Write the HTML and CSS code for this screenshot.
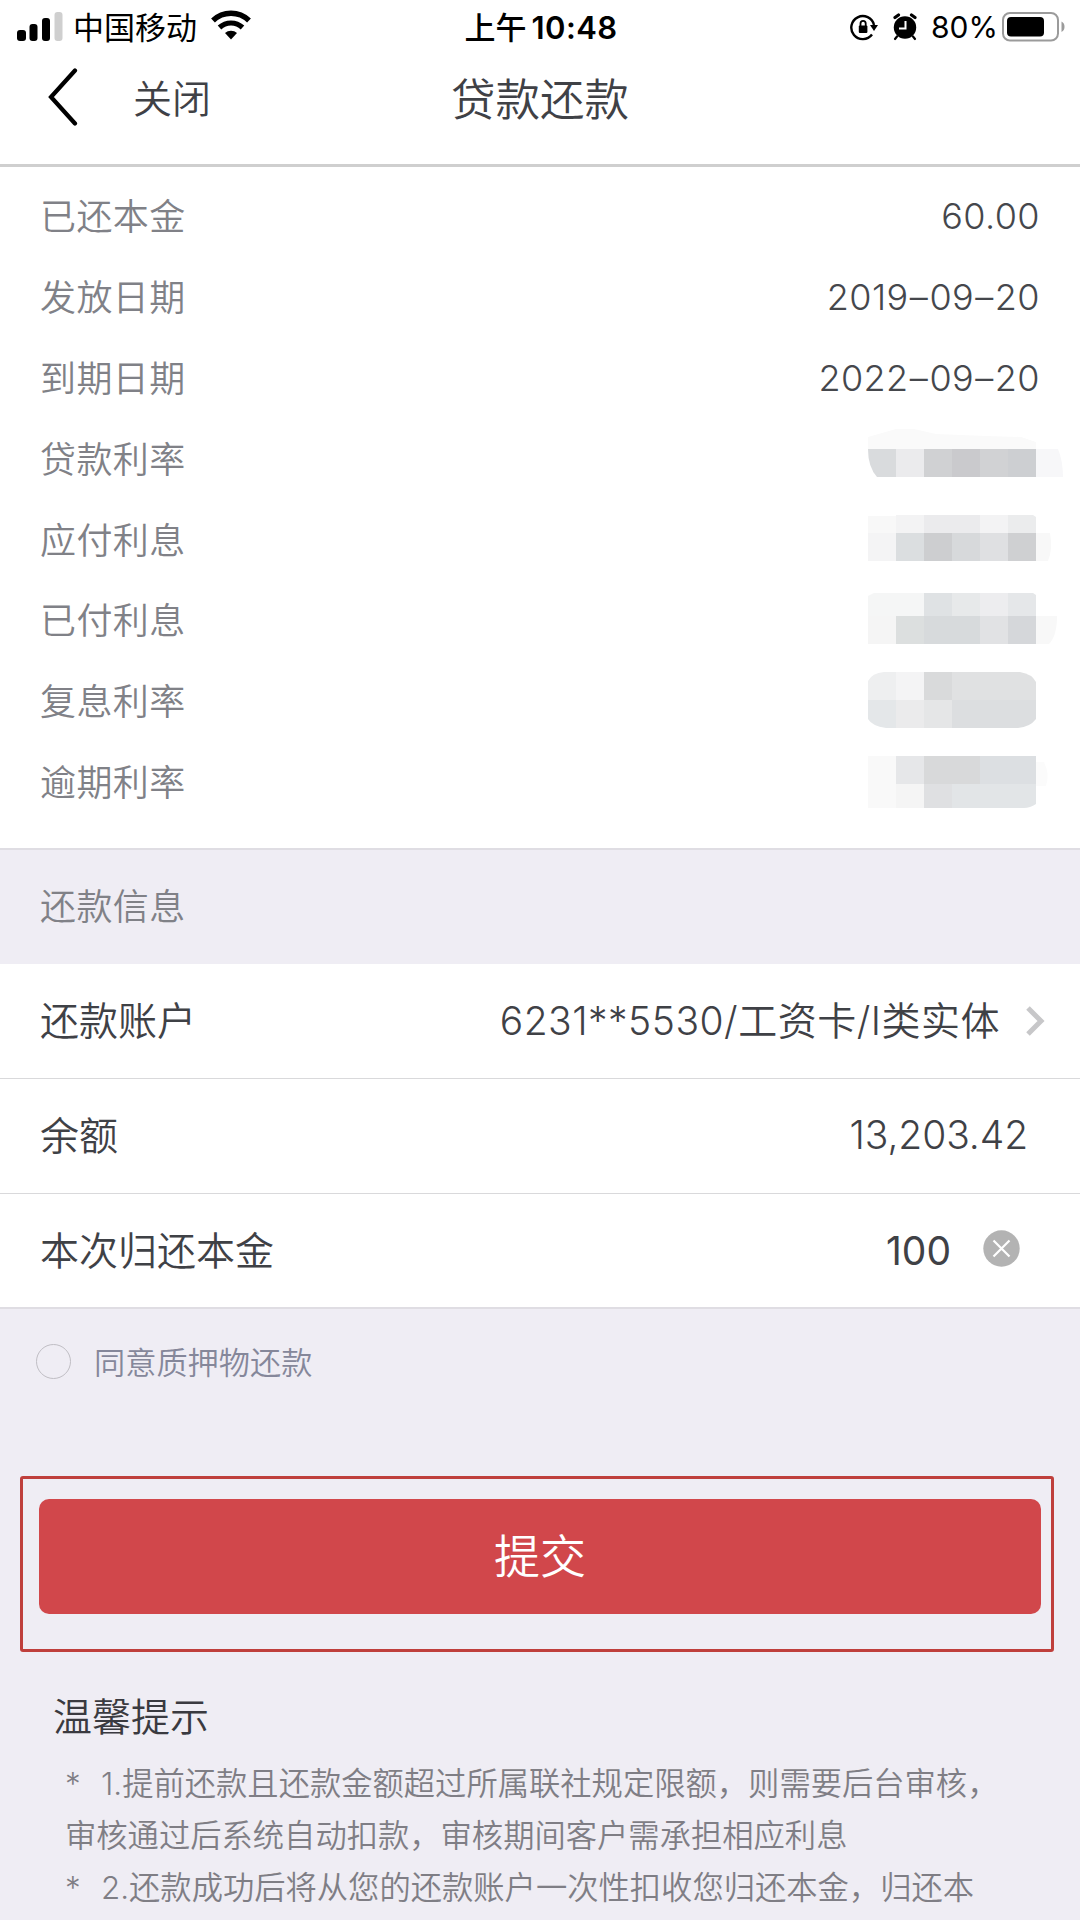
FILE: index.html
```
<!DOCTYPE html>
<html lang="zh-CN">
<head>
    <meta charset="UTF-8">
    <meta name="viewport" content="width=device-width, initial-scale=1.0">
    <title>贷款还款</title>
    <link rel="stylesheet" href="styles.css">
</head>
<body>
    <div class="status-bar">
        <div class="status-left">
            <svg class="signal" width="46" height="30" viewBox="0 0 46 30">
                <rect x="0" y="19" width="9" height="11" rx="3"/>
                <rect x="12.5" y="13" width="8" height="17" rx="3"/>
                <rect x="25" y="7" width="8" height="23" rx="3"/>
                <rect x="37.5" y="1" width="8" height="29" rx="3" fill="#cfcfcf"/>
            </svg>
            <span class="carrier">中国移动</span>
            <svg class="wifi" width="40" height="30" viewBox="0 0 40 30">
                <path d="M2 10.5a26 26 0 0 1 36 0" fill="none" stroke="#000" stroke-width="5.5"/>
                <path d="M8.5 17.5a17 17 0 0 1 23 0" fill="none" stroke="#000" stroke-width="5.2"/>
                <path d="M14 23a9 9 0 0 1 12 0l-6 6.5z"/>
            </svg>
        </div>
        <div class="status-time">上午<b>10:48</b></div>
        <div class="status-right">
            <svg width="28" height="28" viewBox="0 0 28 28">
                <path d="M22 21.5A11.5 11.5 0 1 1 24 12" fill="none" stroke="#000" stroke-width="2.4"/>
                <path d="M20 12h8l-4 6z"/>
                <rect x="8.8" y="12.5" width="8.6" height="7.5" rx="1"/>
                <path d="M10.5 13v-2.5a2.6 2.6 0 0 1 5.200 0v2.500" fill="none" stroke="#000" stroke-width="1.8"/>
            </svg>
            <svg class="alarm" width="24" height="28" viewBox="0 0 24 28">
                <circle cx="12" cy="14.5" r="11.2"/>
                <path d="M2 4.500l3.500-2.500M22 4.500l-3.500-2.500" stroke="#000" stroke-width="3.2" stroke-linecap="round"/>
                <path d="M4 23.500l-2 2.500M20 23.500l2 2.500" stroke="#000" stroke-width="2.2" stroke-linecap="round"/>
                <path d="M12.500 8v7.500H6" fill="none" stroke="#fff" stroke-width="2"/>
            </svg>
            <span class="percent">80%</span>
            <svg class="battery" width="63" height="32" viewBox="0 0 63 32">
                <rect x="1" y="2" width="55" height="27.5" rx="7" fill="none" stroke="#9b9b9b" stroke-width="2"/>
                <rect x="5" y="6" width="37" height="19.5" rx="4"/>
                <path d="M59.500 10.500q3 1.500 3 5.200t-3 5.200z" fill="#9b9b9b"/>
            </svg>
        </div>
    </div>

    <div class="nav-bar">
        <div class="nav-left">
            <svg width="30" height="58" viewBox="0 0 30 58">
                <path d="M27 2.500L3 29l24 26.500" fill="none" stroke="#000" stroke-width="4.2" stroke-linecap="round"/>
            </svg>
            <a class="close">关闭</a>
        </div>
        <h1>贷款还款</h1>
    </div>

    <div class="detail-list">
        <div class="detail-row">
            <span>已还本金</span>
            <span class="value">60.00</span>
        </div>
        <div class="detail-row">
            <span>发放日期</span>
            <span class="value date">2019<i>–</i>09<i>–</i>20</span>
        </div>
        <div class="detail-row">
            <span>到期日期</span>
            <span class="value date">2022<i>–</i>09<i>–</i>20</span>
        </div>
        <div class="detail-row">
            <span>贷款利率</span>
            <svg class="mask" width="196" height="80" viewBox="0 0 196 80">
                <path d="M0 30V18l28-8h18l22 5 50 2 35 1 15 5v7z" fill="#fafafa"/>
                <path d="M0 30h28v28H9Q0 48 0 30z" fill="#d9dbdd"/>
                <path d="M28 30h28v28H28z" fill="#ebebed"/>
                <path d="M56 30h28v28H56z" fill="#d0d1d3"/>
                <path d="M84 30h28v28H84z" fill="#cacacd"/>
                <path d="M112 30h28v28h-28z" fill="#d1d2d4"/>
                <path d="M140 30h28v28h-28z" fill="#cdcfd2"/>
                <path d="M168 30h22q5 12 5 28h-27z" fill="#f7f7f9"/>
            </svg>
        </div>
        <div class="detail-row">
            <span>应付利息</span>
            <svg class="mask" width="196" height="80" viewBox="0 0 196 80">
                <path d="M0 16h28v17H0z" fill="#f8f8f8"/>
                <path d="M28 15h28v18H28z" fill="#f3f3f4"/>
                <path d="M56 15h56v18H56z" fill="#ebebed"/>
                <path d="M112 15h28v18h-28z" fill="#f3f3f4"/>
                <path d="M140 15h25l3 2v16h-28z" fill="#ebeced"/>
                <path d="M0 33h28v28H0z" fill="#f4f4f5"/>
                <path d="M28 33h28v28H28z" fill="#dbdee0"/>
                <path d="M56 33h28v28H56z" fill="#cdced0"/>
                <path d="M84 33h28v28H84z" fill="#d7d9db"/>
                <path d="M112 33h28v28h-28z" fill="#dfe0e2"/>
                <path d="M140 33h28v28h-28z" fill="#cfd0d2"/>
                <path d="M168 33h14q3 16-2 28h-12z" fill="#f8f8f8"/>
            </svg>
        </div>
        <div class="detail-row">
            <span>已付利息</span>
            <svg class="mask" width="196" height="80" viewBox="0 0 196 80">
                <path d="M0 36V16l6-3h50v23z" fill="#f5f6f6"/>
                <path d="M56 13h28v23H56z" fill="#dfe2e4"/>
                <path d="M84 13h28v23H84z" fill="#e7e9ea"/>
                <path d="M112 13h28v23h-28z" fill="#ededef"/>
                <path d="M140 13h25l3 2v21h-28z" fill="#e5e7e9"/>
                <path d="M0 36h28v28H0z" fill="#f5f5f5"/>
                <path d="M28 36h28v28H28z" fill="#dcdfdf"/>
                <path d="M56 36h56v28H56z" fill="#d7dadc"/>
                <path d="M112 36h28v28h-28z" fill="#e1e2e4"/>
                <path d="M140 36h28v28h-28z" fill="#d5d7da"/>
                <path d="M168 36h21q0 20-8 28h-13z" fill="#f8f8f8"/>
            </svg>
        </div>
        <div class="detail-row">
            <span>复息利率</span>
            <svg class="mask" width="196" height="80" viewBox="0 0 196 80">
                <path d="M0 39V20q4-8 16-9h12v28z" fill="#eeeff0"/>
                <path d="M28 11h28v28H28z" fill="#f4f4f5"/>
                <path d="M56 11h28v28H56z" fill="#d9dadb"/>
                <path d="M84 11h68q12 2 16 10v18H84z" fill="#e0e1e2"/>
                <path d="M0 39h28v28H18Q4 65 0 58z" fill="#e4e7e9"/>
                <path d="M28 39h28v28H28z" fill="#ebebec"/>
                <path d="M56 39h28v28H56z" fill="#e5e6e7"/>
                <path d="M84 39h84v19q-6 8-18 9H84z" fill="#dcdee0"/>
            </svg>
        </div>
        <div class="detail-row">
            <span>逾期利率</span>
            <svg class="mask" width="196" height="80" viewBox="0 0 196 80">
                <path d="M0 14h28v52H0z" fill="#f9f9f9"/>
                <path d="M28 14h28v28H28z" fill="#e6e7e9"/>
                <path d="M56 14h56v28H56z" fill="#d8d9da"/>
                <path d="M112 14h56v28h-56z" fill="#dcdfe2"/>
                <path d="M28 42h28v24H28z" fill="#f5f5f5"/>
                <path d="M56 42h28v24H56z" fill="#dfe0e2"/>
                <path d="M84 42h84v20q-6 4-12 4H84z" fill="#e2e5e7"/>
                <path d="M168 20h8q6 12 2 24h-10z" fill="#fbfbfb"/>
            </svg>
        </div>
    </div>

    <div class="section-title">还款信息</div>

    <div class="form-list">
        <div class="form-row">
            <span>还款账户</span>
            <div class="field">
                <span class="account">6231**5530/工资卡/I类实体</span>
                <svg class="arrow" width="20" height="30" viewBox="0 0 20 30">
                    <path d="M3 2l13 13L3 28" fill="none" stroke="#c7c7c9" stroke-width="5"/>
                </svg>
            </div>
        </div>
        <div class="form-row">
            <span>余额</span>
            <span class="balance">13,203.42</span>
        </div>
        <div class="form-row">
            <span>本次归还本金</span>
            <div class="field">
                <span class="amount">100</span>
                <svg class="clear" width="37" height="37" viewBox="0 0 37 37">
                    <circle cx="18.5" cy="18.5" r="18.2" fill="#b3b3b3"/>
                    <path d="M10.500 10.500l16 16M26.500 10.500l-16 16" stroke="#fff" stroke-width="2.2"/>
                </svg>
            </div>
        </div>
    </div>

    <div class="agree">
        <span class="radio"></span>
        <span>同意质押物还款</span>
    </div>

    <div class="submit-frame">
        <button type="button">提交</button>
    </div>

    <div class="tips">
        <h2>温馨提示</h2>
        <p><span class="star">*</span>1.提前还款且还款金额超过所属联社规定限额，则需要后台审核，</p>
        <p>审核通过后系统自动扣款，审核期间客户需承担相应利息</p>
        <p><span class="star">*</span>2.还款成功后将从您的还款账户一次性扣收您归还本金，归还本</p>
    </div>
</body>
</html>
```
FILE: styles.css
```
* {
    box-sizing: border-box;
}

body {
    margin: 0;
    height: 1920px;
    overflow: hidden;
    background-color: #efedf4;
    color: #3f4146;
    font-family: Inter, "Noto Sans CJK SC", sans-serif;
    font-weight: 350;
}

svg {
    display: block;
    flex-shrink: 0;
}

h1, h2, p {
    margin: 0;
    font-weight: 350;
}

.status-bar {
    display: grid;
    grid-template-columns: 1fr auto 1fr;
    align-items: center;
    height: 54px;
    padding: 0 15px 0 17px;
    background-color: #fff;
    color: #000;
}

.status-left, .status-right {
    display: flex;
    align-items: center;
}

.status-right {
    justify-content: flex-end;
}

.signal {
    margin-top: -3px;
}

.carrier {
    margin-left: 10px;
    padding-bottom: 3px;
    font-size: 31px;
    font-weight: 400;
}

.wifi {
    margin-left: 14px;
    margin-top: -4px;
}

.status-time {
    padding-bottom: 3px;
    font-size: 31px;
    font-weight: 500;
}

.status-time b {
    margin-left: 5px;
    font-weight: 600;
    letter-spacing: 0.4px;
}

.alarm {
    margin-left: 15px;
}

.percent {
    margin-left: 14px;
    font-size: 30px;
    font-weight: 400;
}

.battery {
    margin-left: 4px;
}

.nav-bar {
    display: grid;
    grid-template-columns: 1fr auto 1fr;
    align-items: center;
    height: 113px;
    padding: 0 48px 24px;
    background-color: #fff;
    border-bottom: 3px solid #cfcfcf;
}

.nav-left {
    display: flex;
    align-items: center;
    gap: 55px;
}

.close {
    padding-bottom: 2px;
    font-size: 39px;
}

h1 {
    padding-bottom: 2px;
    font-size: 44.5px;
}

.detail-list {
    height: 683px;
    padding: 9px 40px 0;
    background-color: #fff;
    border-bottom: 2px solid #dfdde3;
}

.detail-row {
    display: flex;
    justify-content: space-between;
    align-items: center;
    height: 80.8px;
    font-size: 36px;
    letter-spacing: 0.4px;
    color: #808187;
}

.detail-row span:first-child {
    padding-bottom: 4px;
}

.value {
    color: #45474c;
    font-weight: 300;
}

.date i {
    margin: 0 1.2px;
    font-style: normal;
}

.mask {
    margin-right: -24px;
}

.section-title {
    height: 114px;
    padding-left: 40px;
    font-size: 36px;
    line-height: 114px;
    letter-spacing: 0.4px;
    color: #808187;
}

.form-list {
    background-color: #fff;
    border-bottom: 2px solid #dfdde3;
}

.form-row {
    display: flex;
    justify-content: space-between;
    align-items: center;
    height: 115px;
    padding: 0 35px 0 40px;
    font-size: 39px;
    border-bottom: 1px solid #d9d9db;
}

.form-row > span:first-child, .account {
    padding-bottom: 6px;
}

.form-row:last-child {
    height: 113px;
    border-bottom: none;
}

.field {
    display: flex;
    align-items: center;
}

.account {
    letter-spacing: 0.5px;
}

.arrow {
    margin-left: 25px;
}

.balance {
    margin-right: 17px;
    padding-bottom: 3px;
    letter-spacing: -0.1px;
}

.amount {
    font-weight: 400;
}

.clear {
    margin: -4px 25px 0 32px;
}

.agree {
    display: flex;
    align-items: center;
    gap: 23px;
    height: 108px;
    padding: 0 0 3px 36px;
    font-size: 31.2px;
    color: #85879a;
}

.agree span:last-child {
    padding-bottom: 2px;
}

.radio {
    width: 35px;
    height: 35px;
    border: 1px solid #c0bec4;
    border-radius: 50%;
}

.submit-frame {
    height: 176px;
    margin: 59px 26px 0 20px;
    padding: 20px 10px 0 16px;
    border: 3px solid #bf3f3c;
    border-radius: 3px;
}

button {
    width: 100%;
    height: 115px;
    padding: 0 0 7px;
    border: none;
    border-radius: 10px;
    background-color: #d1474b;
    color: #fff;
    font-family: inherit;
    font-size: 46px;
    font-weight: 350;
}

.tips {
    padding: 36px 0 0 65px;
    font-size: 31.3px;
    line-height: 52px;
    color: #7f7e85;
    white-space: nowrap;
}

h2 {
    margin: 0 0 12px -12px;
    font-size: 39px;
    line-height: 58px;
    color: #3a3a40;
}

.star {
    display: inline-block;
    width: 36px;
}
```
